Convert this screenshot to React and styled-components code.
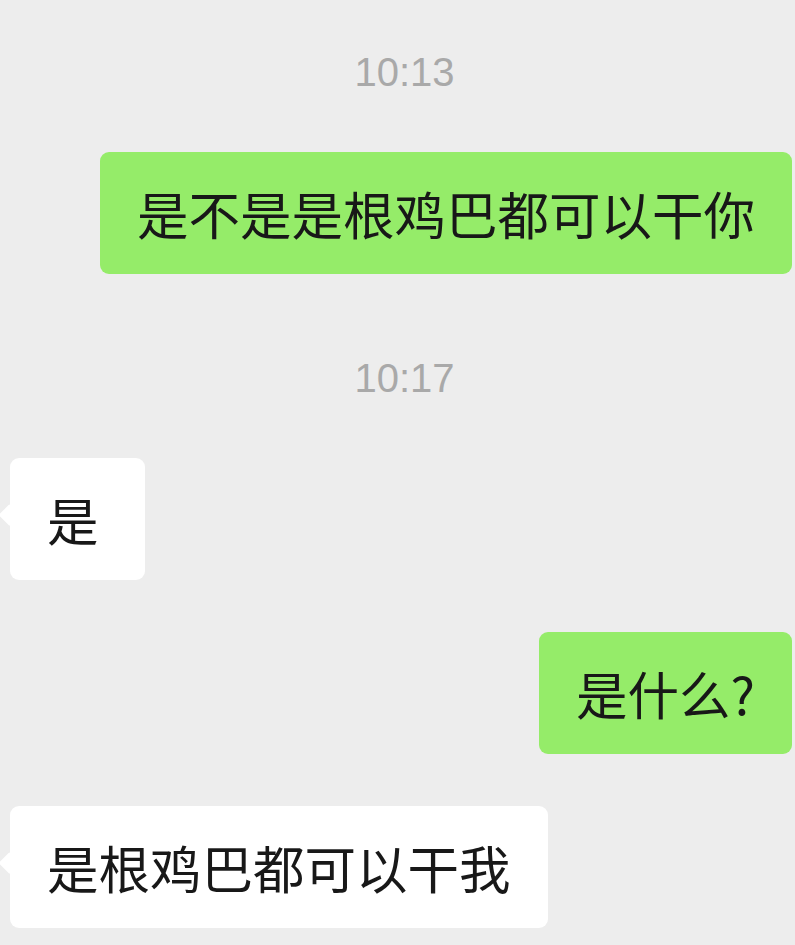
import React from "react";
import styled, { createGlobalStyle } from "styled-components";

const messages = [
  { type: "time", text: "10:13" },
  { type: "msg", mine: true, text: "是不是是根鸡巴都可以干你" },
  { type: "time", text: "10:17", gap: 84 },
  { type: "msg", mine: false, text: "是" },
  { type: "msg", mine: true, text: "是什么?", gap: 52 },
  { type: "msg", mine: false, text: "是根鸡巴都可以干我", gap: 52 },
];

const GlobalStyle = createGlobalStyle`
  html, body {
    margin: 0;
    padding: 0;
    background: #ededed;
    overflow: hidden;
  }
`;

const Wrapper = styled.div`
  width: 795px;
  height: 945px;
  background: #ededed;
  overflow: hidden;
  display: flex;
  flex-direction: column;
  padding-top: 52px;
  box-sizing: border-box;
  font-family: "Noto Sans CJK SC", "Noto Sans", sans-serif;
`;

const TimeStamp = styled.div`
  margin-top: ${p => p.$gap || 0}px;
  padding-left: 14px;
  text-align: center;
  font-family: "Liberation Sans", Arial, sans-serif;
  font-size: 40px;
  line-height: 40px;
  height: 40px;
  color: #a9a9a9;
`;

const Row = styled.div`
  display: flex;
  justify-content: ${p => (p.$mine ? "flex-end" : "flex-start")};
  margin-top: ${p => p.$gap}px;
  padding: ${p => (p.$mine ? "0 3px 0 0" : "0 0 0 10px")};
`;

const Bubble = styled.div`
  position: relative;
  box-sizing: border-box;
  min-width: 135px;
  border-radius: 9px;
  padding: 35px 37px;
  font-size: 51.5px;
  line-height: 52px;
  height: 122px;
  color: #181818;
  white-space: nowrap;
  background: ${p => (p.$mine ? "#95ec69" : "#ffffff")};

  &::before {
    content: "";
    display: ${p => (p.$mine ? "none" : "block")};
    position: absolute;
    top: 49px;
    left: -8px;
    width: 16px;
    height: 16px;
    border-radius: 2px;
    background: inherit;
    transform: rotate(45deg);
  }
`;

function App() {
  let prev = null;
  return (
    <>
      <GlobalStyle />
      <Wrapper>
        {messages.map((m, i) => {
          let gap = m.gap;
          if (gap === undefined) gap = prev === "time" ? 60 : 0;
          prev = m.type;
          if (m.type === "time") {
            return <TimeStamp key={i} $gap={gap}>{m.text}</TimeStamp>;
          }
          return (
            <Row key={i} $mine={m.mine} $gap={gap}>
              <Bubble $mine={m.mine}>{m.text}</Bubble>
            </Row>
          );
        })}
      </Wrapper>
    </>
  );
}

export default App;
